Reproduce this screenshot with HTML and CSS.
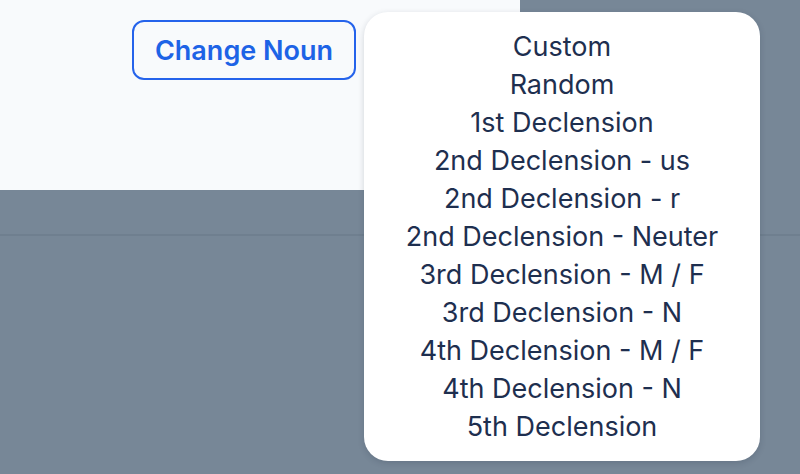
FILE: index.html
```html
<!DOCTYPE html>
<html lang="en">
<head>
<meta charset="utf-8">
<title>Change Noun</title>
<link rel="stylesheet" href="styles.css">
</head>
<body>
<div class="page">
  <header class="panel">
    <div class="toolbar">
      <button class="change-btn" type="button">Change Noun</button>
    </div>
  </header>
  <section class="lower"></section>
  <ul class="menu">
    <li>Custom</li>
    <li>Random</li>
    <li>1st Declension</li>
    <li>2nd Declension - us</li>
    <li>2nd Declension - r</li>
    <li>2nd Declension - Neuter</li>
    <li>3rd Declension - M / F</li>
    <li>3rd Declension - N</li>
    <li>4th Declension - M / F</li>
    <li>4th Declension - N</li>
    <li>5th Declension</li>
  </ul>
</div>
</body>
</html>
```

FILE: styles.css
```css
html, body {
  margin: 0;
  padding: 0;
}
body {
  background: #778797;
  font-family: Inter, "Noto Sans", "Liberation Sans", sans-serif;
  width: 800px;
  height: 474px;
  overflow: hidden;
}
.page {
  position: relative;
  width: 800px;
  height: 474px;
}
.panel {
  width: 520px;
  height: 190px;
  background: #f8fafc;
  box-sizing: border-box;
  padding: 20px 0 0 132px;
}
.toolbar {
  display: flex;
}
.change-btn {
  width: 224px;
  height: 60px;
  box-sizing: border-box;
  border: 2px solid #2563eb;
  border-radius: 12px;
  background: transparent;
  color: #1d63e6;
  font-family: Inter, "Noto Sans", sans-serif;
  font-size: 27px;
  font-weight: 600;
  padding: 0;
  cursor: pointer;
}
.lower {
  margin-top: 44px;
  border-top: 2px solid #6f7f8f;
}
.menu {
  position: absolute;
  left: 364px;
  top: 12px;
  width: 396px;
  box-sizing: border-box;
  margin: 0;
  padding: 16px 0 15px;
  list-style: none;
  background: #ffffff;
  border-radius: 24px;
  box-shadow: 0 2px 6px rgba(30, 41, 59, 0.18);
  text-align: center;
  color: #1e2f4f;
  font-size: 27px;
  line-height: 38px;
}
.menu li {
  white-space: nowrap;
}
```
